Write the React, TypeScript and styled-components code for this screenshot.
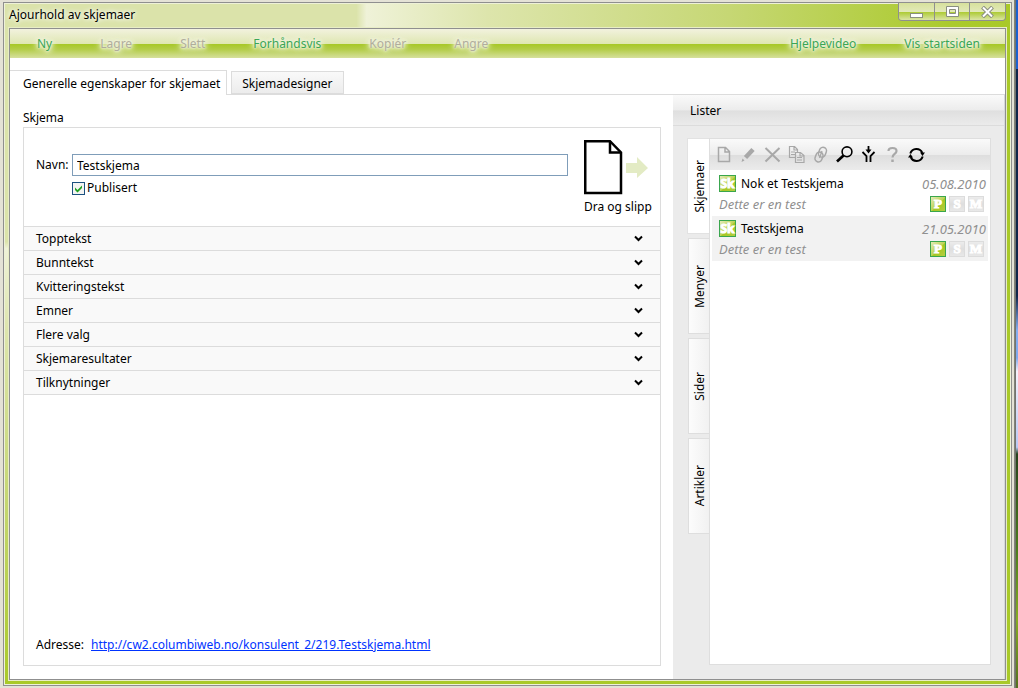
import React, { useState } from 'react';
import styled, { createGlobalStyle, css } from 'styled-components';

const GlobalStyle = createGlobalStyle`
  *, *::before, *::after { box-sizing: border-box; }
  body {
    margin: 0;
    font: 12px/16px "Noto Sans", "Open Sans", sans-serif;
    color: #000;
  }
  button, input { font: inherit; color: inherit; margin: 0; }
  button { border: 0; padding: 0; background: none; cursor: pointer; }
  button:disabled { cursor: default; }
  h2, p, ul { margin: 0; padding: 0; font: inherit; list-style: none; }
`;

const Desktop = styled.div`
  display: flex;
  min-height: 100vh;
  padding: 2px 6px 2px 3px;
  background:
    linear-gradient(to bottom, #1b5fd0 0 10%, #10254a 10% 43%, #86aef0 48%, #7fa8ee 52%, #f4f1fb 54%, #b9c8f4 65%, #27431d 66%, #4c7d1c 80%, #86ac22 90%, #54701f 100%) right / 2px 100% no-repeat,
    linear-gradient(to right, #8b8b80, #6c6c66) right 2px top / 2px 100% no-repeat,
    #e4e2d6;
`;

const Frame = styled.div`
  flex: 1;
  min-width: 0;
  display: flex;
  flex-direction: column;
  padding: 0 5px 5px;
  border: 1px solid #8f8f8f;
  box-shadow: inset 0 0 0 1px #eef1d8;
  background:
    linear-gradient(to right, #dbe3aa 0 35%, #eff2d8 36%, #dde5ac 48%, #c6d774 72%, #abca2d 94%, #a9c928) top / 100% 25px no-repeat,
    linear-gradient(to bottom, #dbe3aa 0 35%, #eff2d8 36%, #dde5ac 48%, #c6d774 72%, #a9c928) left / 5px 100% no-repeat,
    #a9c928;
`;

const TitleBar = styled.header`
  display: flex;
  justify-content: space-between;
  height: 25px;
`;

const Title = styled.h1`
  margin: 0;
  font: inherit;
  line-height: 24px;
  text-shadow: 0 0 4px #fff, 0 0 6px #fff;
`;

const WindowButtons = styled.div`
  display: flex;
  height: 18px;
  border: 1px solid #8f8f8f;
  border-top: 0;
  border-radius: 0 0 4px 4px;
  overflow: hidden;
`;

const WindowButton = styled.button`
  display: grid;
  place-items: center;
  width: 35px;
  background: linear-gradient(to bottom, #d7e19c, #e2e9b8 50%, #abca30 52%, #dbe4a6);
  & + & { border-left: 1px solid #8f8f8f; }
  &:last-child { width: 36px; }
`;

const Client = styled.div`
  flex: 1;
  display: flex;
  flex-direction: column;
  border: 1px solid #8f8f8f;
  box-shadow: 0 0 0 1px #e8edc6;
  background: #fff;
`;

const MenuBar = styled.nav`
  display: flex;
  height: 29px;
  padding: 0 1px 0 3px;
  background: linear-gradient(to bottom, #f2f2de, #dfe7b2 50%, #a7c828 53%, #b3cd48 70%, #d6e09c);
`;

const MenuItem = styled.button`
  padding: 0 24px;
  color: #3aa655;
  text-shadow: 0 0 2px #eef1d8, 0 0 3px #eef1d8, 0 0 4px #eef1d8, 0 0 5px #eef1d8, 0 0 6px #eef1d8, 0 0 8px #eef1d8, 0 0 10px #eef1d8;
  &:disabled { color: #b0ad9c; }
`;

const Spacer = styled.span`
  flex: 1;
`;

const PageTabs = styled.div`
  display: flex;
  align-items: flex-end;
  gap: 4px;
  height: 37px;
  border-bottom: 1px solid #dcdcdc;
`;

const PageTab = styled.button<{ $active: boolean }>`
  height: 23px;
  padding: 2px 10px 0;
  border: 1px solid #dcdcdc;
  background: linear-gradient(to bottom, #f9f9f9, #ececec);
  ${p => p.$active && css`
    height: 25px;
    padding: 1px 6px 0 13px;
    margin-bottom: -1px;
    border-width: 1px 1px 0 0;
    background: #fff;
  `}
`;

const Workspace = styled.div`
  flex: 1;
  display: flex;
`;

const FormColumn = styled.main`
  flex: 1;
  display: flex;
  flex-direction: column;
  padding: 15px 12px 13px 13px;
`;

const FormTitle = styled.h2`
  padding-bottom: 1px;
`;

const FormPanel = styled.section`
  flex: 1;
  display: flex;
  flex-direction: column;
  border: 1px solid #dcdcdc;
`;

const FormTop = styled.div`
  display: flex;
  gap: 16px;
  height: 98px;
  padding: 12px 12px 0 12px;
`;

const Fields = styled.div`
  flex: 1;
  display: grid;
  grid-template-columns: 36px 1fr;
  grid-auto-rows: 22px;
  row-gap: 1px;
  align-content: start;
  align-items: center;
  padding-top: 14px;
`;

const NameInput = styled.input`
  width: 100%;
  height: 22px;
  padding: 0 4px;
  border: 1px solid #7f9db9;
  outline: 0;
  background: #fff;
`;

const CheckLabel = styled.label`
  grid-column: 2;
  display: flex;
  align-items: center;
  gap: 2px;
`;

const CheckBox = styled.input`
  appearance: none;
  width: 13px;
  height: 13px;
  border: 1px solid #1c5180;
  background: #f4f4f2;
  &:checked {
    background: url("data:image/svg+xml,%3Csvg xmlns='http://www.w3.org/2000/svg' viewBox='0 0 11 11'%3E%3Cpath d='M2 4.5 4.5 7 9 2.5v2.5L4.5 9.5 2 7z' fill='%2321a121'/%3E%3C/svg%3E") #f4f4f2;
  }
`;

const DragSource = styled.div`
  display: flex;
  flex-direction: column;
  gap: 3px;
  width: 64px;
  white-space: nowrap;
`;

const Section = styled.button`
  display: flex;
  align-items: center;
  justify-content: space-between;
  height: 24px;
  padding: 0 17px 0 12px;
  border-top: 1px solid #dcdcdc;
  background: #f9f9f9;
  text-align: left;
`;

const AddressRow = styled.p`
  flex: 1;
  display: flex;
  align-items: flex-end;
  gap: 7px;
  padding: 12px;
  border-top: 1px solid #dcdcdc;
  a { color: #0033ff; }
`;

const Sidebar = styled.aside`
  width: 332px;
  display: flex;
  flex-direction: column;
  border-right: 1px solid #d6d8da;
  background: #ebebeb;
`;

const SidebarTitle = styled.h2`
  height: 31px;
  padding: 0 17px;
  line-height: 32px;
  border-bottom: 1px solid #dcdcdc;
  background: linear-gradient(to bottom, #fafafa, #ececec 50%, #dfdfdf 53%, #ebebeb);
`;

const SidebarBody = styled.div`
  flex: 1;
  display: flex;
  padding: 12px 13px 14px 14px;
`;

const SideTabs = styled.div`
  display: flex;
  flex-direction: column;
  align-items: flex-end;
  gap: 4px;
  width: 22px;
`;

const SideTab = styled.button<{ $active: boolean }>`
  width: 21px;
  height: 96px;
  padding: 4px 0 0 2px;
  border: 1px solid #dedede;
  border-right: 0;
  background: linear-gradient(to right, #fcfcfc, #f1f1f1);
  ${p => p.$active && css`
    width: 23px;
    margin-right: -1px;
    border-color: #e2e2e2;
    background: #fff;
  `}
  span {
    writing-mode: vertical-rl;
    transform: rotate(180deg);
  }
`;

const ListPanel = styled.section`
  flex: 1;
  border: 1px solid #dedede;
  background: #fff;
`;

const ToolBar = styled.div`
  display: flex;
  height: 31px;
  padding-left: 2px;
  background: linear-gradient(to bottom, #fafafa, #ececec 50%, #dedede 53%, #ebebeb);
`;

const ToolButton = styled.button`
  display: grid;
  place-items: center;
  width: 24px;
`;

const Entries = styled.ul`
  && { padding: 1px 2px; }
`;

const Entry = styled.li<{ $selected: boolean }>`
  display: flex;
  flex-direction: column;
  gap: 3px;
  height: 45px;
  padding: 4px 2px 0 7px;
  background: ${p => (p.$selected ? '#f2f2f2' : '#fff')};
`;

const EntryLine = styled.div`
  display: flex;
  align-items: center;
  height: 17px;
`;

const EntryName = styled.span`
  flex: 1;
  padding-left: 5px;
`;

const Muted = styled.span`
  color: #909090;
  font-size: 13px;
  font-style: italic;
`;

const Badges = styled.span`
  display: flex;
  gap: 3px;
  margin-left: auto;
  padding-right: 2px;
`;

const Badge = styled.span<{ $on?: boolean }>`
  width: 16px;
  height: 16px;
  border: 1px solid ${p => (p.$on ? '#3aa64c' : '#dcdcdc')};
  background: ${p => (p.$on
    ? 'linear-gradient(135deg, #e4ecb8, #bcd356 50%, #a5c722 55%, #b4ce42)'
    : 'linear-gradient(to bottom, #ececec, #dedede 50%, #e8e8e8)')};
  color: #fff;
  font: bold 13px/14px "Liberation Serif", serif;
  text-align: center;
  -webkit-text-stroke: 1px #fff;
`;

const TypeBadge = styled(Badge)`
  width: 17px;
  height: 17px;
  font: bold 12px/15px "Noto Sans", sans-serif;
`;

const Chevron = () => (
  <svg width="9" height="7" viewBox="0 0 9 7" fill="none" stroke="#000" strokeWidth="2">
    <path d="M1 1.5 4.5 5 8 1.5" />
  </svg>
);

const DragPicture = () => (
  <svg width="65" height="56" viewBox="0 0 65 56">
    <path d="M1.25 1.25H26L37 12.5V53H1.25Z" fill="#fff" stroke="#000" strokeWidth="2.5" />
    <path d="M26 1V12.5H37" fill="none" stroke="#000" strokeWidth="2.5" />
    <path d="M42 23H53V17L64 28 53 38V33H42Z" fill="#e3ebc4" />
  </svg>
);

const toolShapes = [
  { label: 'Ny', muted: true, shape: <path d="M2.500 1.500h7l4 4v10h-11zM9 1.500v4.500h4.500" /> },
  { label: 'Rediger', muted: true, shape: <><path d="M5.500 11.500 13 3.500" strokeWidth="4.500" /><path d="M2.500 12.500 4.500 14.500 1.500 16z" fill="currentColor" stroke="none" /></> },
  { label: 'Slett', muted: true, shape: <path d="M1.500 2 15.500 15.500M15.500 2 1.500 15.500" strokeWidth="2" /> },
  { label: 'Kopier', muted: true, shape: <path d="M7 11.500H1.500V.5h5l3 3V6M6 .5v3.500h3.500M3 6h4M3 8.500h4M7.500 6.500h5l3.500 3v7H7.500zM12 6.500V10h4M9 11.500h5M9 14h5" strokeWidth="1.200" /> },
  { label: 'Lenke', muted: true, shape: <><rect x="7" y="1" width="7" height="10" rx="3.500" transform="rotate(20 10 6)" /><rect x="3.500" y="6" width="7" height="10" rx="3.500" transform="rotate(20 7 11)" /><path d="M7.500 12 10 5" strokeWidth="1.300" /></> },
  { label: 'Søk', muted: false, shape: <><circle cx="11" cy="5.800" r="4.900" strokeWidth="1.600" /><path d="M7.500 9.500 1 15.500" strokeWidth="2.700" /></> },
  { label: 'Filter', muted: false, shape: <><path d="M8.500 0v5" strokeWidth="1.800" /><path d="M5.500 3.500h6l-3 4z" fill="currentColor" stroke="none" /><path d="M2.500 6 6.500 10V16M14.500 6 10.500 10V16" strokeWidth="1.800" /></> },
  { label: 'Hjelp', muted: true, shape: <><path d="M4.500 5C4.500 1 12.500 1 12.500 5 12.500 8 8.500 8 8.500 11.500" strokeWidth="2.200" /><path d="M8.500 13.500v2.500" strokeWidth="2.500" /></> },
  { label: 'Oppdater', muted: false, shape: <><path d="M2.300 7.500a6.400 6.400 0 0 1 12-.5M14.700 10.500a6.400 6.400 0 0 1-12 .5" strokeWidth="2" /><path d="M12 6.500h5l-2.500 3.500zM5 11.500h-5l2.500-3.500z" fill="currentColor" stroke="none" /></> },
];

const menu = [
  { text: 'Ny', on: true },
  { text: 'Lagre', on: false },
  { text: 'Slett', on: false },
  { text: 'Forhåndsvis', on: true },
  { text: 'Kopiér', on: false },
  { text: 'Angre', on: false },
];
const sections = ['Topptekst', 'Bunntekst', 'Kvitteringstekst', 'Emner', 'Flere valg', 'Skjemaresultater', 'Tilknytninger'];
const pageTabs = ['Generelle egenskaper for skjemaet', 'Skjemadesigner'];
const sideTabs = ['Skjemaer', 'Menyer', 'Sider', 'Artikler'];
const entries = [
  { name: 'Nok et Testskjema', date: '05.08.2010', note: 'Dette er en test' },
  { name: 'Testskjema', date: '21.05.2010', note: 'Dette er en test' },
];

export default function App() {
  const [pageTab, setPageTab] = useState(0);
  const [sideTab, setSideTab] = useState(0);
  const [selected, setSelected] = useState(1);

  return (
    <>
      <GlobalStyle />
      <Desktop>
        <Frame>
          <TitleBar>
            <Title>Ajourhold av skjemaer</Title>
            <WindowButtons>
              <WindowButton aria-label="Minimer">
                <svg width="13" height="12"><rect x=".5" y="7.500" width="12" height="4" fill="#fff" stroke="#8a8f80" /></svg>
              </WindowButton>
              <WindowButton aria-label="Maksimer">
                <svg width="13" height="12"><path d="M.5.5h12v10H.5zM3.500 3.500h6v4h-6z" fill="#fff" fillRule="evenodd" stroke="#8a8f80" /></svg>
              </WindowButton>
              <WindowButton aria-label="Lukk">
                <svg width="13" height="12" fill="none"><path d="M1.500 1 11.500 11M11.500 1 1.500 11" stroke="#8a8f80" strokeWidth="4" /><path d="M2 1.500 11 10.500M11 1.500 2 10.500" stroke="#fff" strokeWidth="2" /></svg>
              </WindowButton>
            </WindowButtons>
          </TitleBar>
          <Client>
            <MenuBar>
              {menu.map(m => <MenuItem key={m.text} disabled={!m.on}>{m.text}</MenuItem>)}
              <Spacer />
              <MenuItem>Hjelpevideo</MenuItem>
              <MenuItem>Vis startsiden</MenuItem>
            </MenuBar>
            <PageTabs role="tablist">
              {pageTabs.map((t, i) => (
                <PageTab key={t} role="tab" aria-selected={i === pageTab} $active={i === pageTab} onClick={() => setPageTab(i)}>{t}</PageTab>
              ))}
            </PageTabs>
            <Workspace>
              <FormColumn>
                <FormTitle>Skjema</FormTitle>
                <FormPanel>
                  <FormTop>
                    <Fields>
                      <label htmlFor="navn">Navn:</label>
                      <NameInput id="navn" type="text" defaultValue="Testskjema" />
                      <CheckLabel><CheckBox type="checkbox" defaultChecked />Publisert</CheckLabel>
                    </Fields>
                    <DragSource draggable>
                      <DragPicture />
                      <span>Dra og slipp</span>
                    </DragSource>
                  </FormTop>
                  {sections.map(s => <Section key={s} aria-expanded={false}>{s}<Chevron /></Section>)}
                  <AddressRow>
                    <span>Adresse:</span>
                    <a href="http://cw2.columbiweb.no/konsulent_2/219.Testskjema.html">http://cw2.columbiweb.no/konsulent_2/219.Testskjema.html</a>
                  </AddressRow>
                </FormPanel>
              </FormColumn>
              <Sidebar>
                <SidebarTitle>Lister</SidebarTitle>
                <SidebarBody>
                  <SideTabs role="tablist" aria-orientation="vertical">
                    {sideTabs.map((t, i) => (
                      <SideTab key={t} role="tab" aria-selected={i === sideTab} $active={i === sideTab} onClick={() => setSideTab(i)}><span>{t}</span></SideTab>
                    ))}
                  </SideTabs>
                  <ListPanel>
                    <ToolBar>
                      {toolShapes.map(t => (
                        <ToolButton key={t.label} aria-label={t.label}>
                          <svg width="17" height="17" viewBox="0 0 17 17" fill="none" stroke="currentColor" strokeWidth="1.500" color={t.muted ? '#a8a8a8' : '#000'}>{t.shape}</svg>
                        </ToolButton>
                      ))}
                    </ToolBar>
                    <Entries>
                      {entries.map((e, i) => (
                        <Entry key={e.name} $selected={i === selected} onClick={() => setSelected(i)}>
                          <EntryLine>
                            <TypeBadge $on>Sk</TypeBadge>
                            <EntryName>{e.name}</EntryName>
                            <Muted>{e.date}</Muted>
                          </EntryLine>
                          <EntryLine>
                            <Muted>{e.note}</Muted>
                            <Badges><Badge $on>P</Badge><Badge>S</Badge><Badge>M</Badge></Badges>
                          </EntryLine>
                        </Entry>
                      ))}
                    </Entries>
                  </ListPanel>
                </SidebarBody>
              </Sidebar>
            </Workspace>
          </Client>
        </Frame>
      </Desktop>
    </>
  );
}
